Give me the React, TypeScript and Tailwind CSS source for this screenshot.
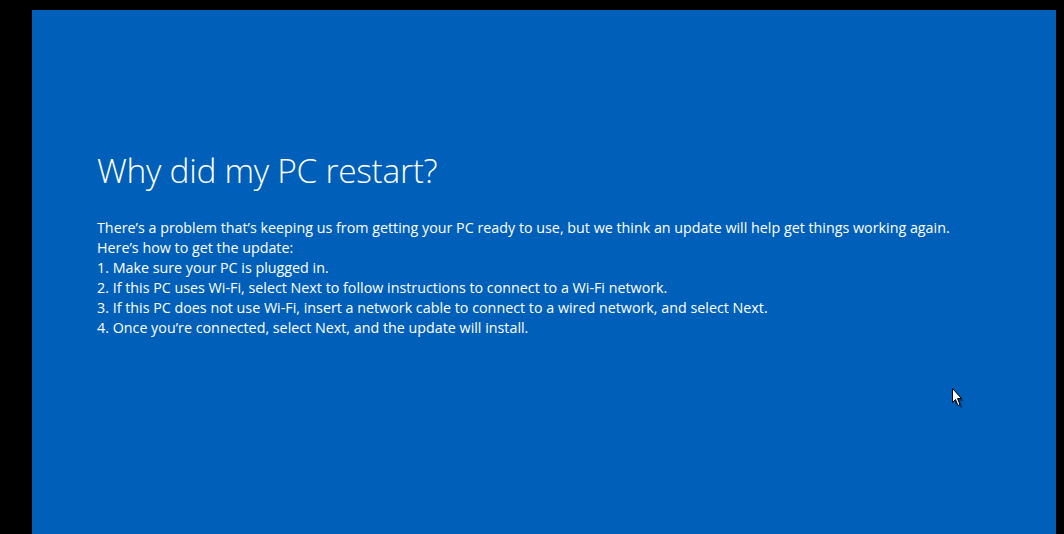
import React from "react";

function Cursor() {
  return (
    <svg width="14" height="22" viewBox="0 0 14 22" className="absolute left-[951px] top-[387px]">
      <path d="M2.5 2.5 L2.5 16.5 L5.5 13.5 L8 19.5 L10 18.5 L7.5 12.5 L11.5 12.5 Z" fill="#000" opacity="0.35" transform="translate(1.5,1.5)" />
      <path d="M1.5 1.5 L1.5 15.5 L4.5 12.5 L7 18.5 L9 17.5 L6.5 11.5 L10.5 11.5 Z" fill="#fff" stroke="#000" strokeWidth="1" strokeLinejoin="miter" />
    </svg>
  );
}

export default function App() {
  return (
    <div className="relative w-[1064px] h-[534px] bg-black pt-[10px] pl-[32px] pr-[8px] overflow-hidden">
      <div className="w-full h-full bg-[#005fb8] text-white pl-[65px] pt-[134px]" style={{ fontFamily: '"Open Sans", "Noto Sans", sans-serif' }}>
        <h1 className="text-[33.5px] leading-[52px] font-light tracking-[-0.3px]">Why did my PC restart?</h1>
        <div className="mt-[22px] text-[14.3px] leading-[20px]">
          <p>There’s a problem that’s keeping us from getting your PC ready to use, but we think an update will help get things working again.</p>
          <p>Here’s how to get the update:</p>
          <p>1. Make sure your PC is plugged in.</p>
          <p>2. If this PC uses Wi-Fi, select Next to follow instructions to connect to a Wi-Fi network.</p>
          <p>3. If this PC does not use Wi-Fi, insert a network cable to connect to a wired network, and select Next.</p>
          <p>4. Once you’re connected, select Next, and the update will install.</p>
        </div>
      </div>
      <Cursor />
    </div>
  );
}
